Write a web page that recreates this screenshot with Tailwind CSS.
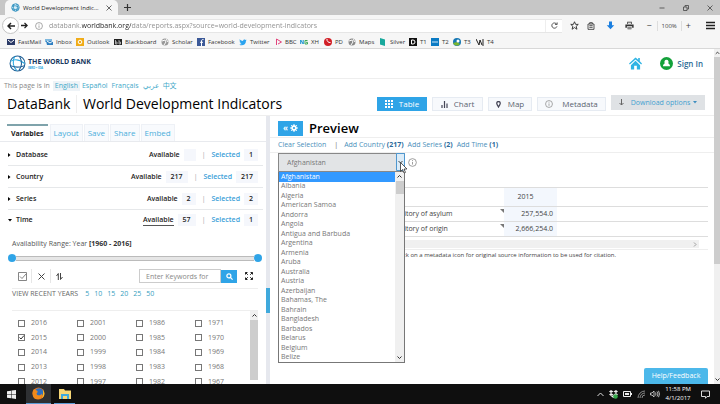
<!DOCTYPE html>
<html lang="en">
<head>
    <meta charset="UTF-8">
    <meta name="viewport" content="width=device-width, initial-scale=1.0">
    <title>World Development Indicators | DataBank</title>
    <script src="https://cdn.jsdelivr.net/npm/@tailwindcss/browser@4"></script>
</head>
<body class="h-screen flex flex-col overflow-hidden bg-white text-[#444] text-[7px] leading-[10px] font-['Open_Sans','Noto_Sans_CJK_SC',sans-serif]">

    <!-- Browser title bar -->
    <div class="flex h-[15px] shrink-0 bg-[#c6c6c6]">
        <div class="flex items-center w-[113px] ml-[5px] pl-[6px] pr-[6px] bg-[#f6f6f6] rounded-t-[5px] text-[6px] text-[#222]">
            <svg class="size-[9px] shrink-0" viewBox="0 0 24 24" fill="none" stroke="#1c86b8" stroke-width="2"><circle cx="12" cy="12" r="10" fill="#d8eef8"/><path d="M3 9c6-3 12-2 18 3M8 3c-3 6-2 13 3 19M15 2c3 6 3 13-1 20M2 15c6 3 13 3 19 0"/></svg>
            <span class="ml-[3px] flex-1 whitespace-nowrap">World Development Indic...</span>
            <button aria-label="Close tab"><svg class="size-[6px]" viewBox="0 0 6 6" stroke="#444" stroke-width="0.8"><path d="M.5.5l5 5M5.5.5l-5 5"/></svg></button>
        </div>
        <button class="ml-[6px]" aria-label="New tab"><svg class="size-[7px]" viewBox="0 0 7 7" stroke="#333" stroke-width="1.2"><path d="M3.500 0v7M0 3.500h7"/></svg></button>
        <div class="flex items-center gap-[18px] ml-auto pr-[7px]">
            <svg class="size-[6px]" viewBox="0 0 6 6" stroke="#444" stroke-width="0.8"><path d="M.5 3h5"/></svg>
            <svg class="size-[6px]" viewBox="0 0 6 6" fill="none" stroke="#444" stroke-width="0.8"><path d="M.5 2h3.500v3.500H.5zM2 2V.5h3.500V4H4"/></svg>
            <svg class="size-[6px]" viewBox="0 0 6 6" stroke="#444" stroke-width="0.8"><path d="M.5.5l5 5M5.500.5l-5 5"/></svg>
        </div>
    </div>

    <!-- Address bar -->
    <div class="flex items-center h-[20px] shrink-0 bg-[#f6f6f6] pl-[2px] pr-[5px] pt-[1px]">
        <button class="flex items-center justify-center size-[17px] shrink-0 rounded-full border border-[#c4c4c4] bg-white" aria-label="Back">
            <svg class="size-[8px]" viewBox="0 0 8 8" fill="none" stroke="#222" stroke-width="1.500"><path d="M8 4H1.500M4 1L1 4l3 3"/></svg>
        </button>
        <div class="flex items-center flex-1 h-[14px] bg-white border-y border-[#e6e6e6]">
            <button class="ml-[2px]" aria-label="Forward"><svg class="size-[7px]" viewBox="0 0 8 8" fill="none" stroke="#222" stroke-width="1.500"><path d="M0 4h6.500M4 1l3 3-3 3"/></svg></button>
            <svg class="size-[8px] ml-[7px] shrink-0" viewBox="0 0 10 10" fill="none" stroke="#888" stroke-width="0.9"><circle cx="5" cy="5" r="4.300"/><path d="M5 4.300v3M5 2.300v1"/></svg>
            <input type="text" aria-label="Address" value="databank.worldbank.org/data/reports.aspx?source=world-development-indicators" class="ml-[6px] flex-1 h-[12px] text-[7px] text-transparent bg-clip-text bg-[linear-gradient(90deg,#8c8c8c_33px,#222_33px,#222_82px,#8c8c8c_82px)]">
            <button class="flex items-center justify-center w-[17px] h-[12px] border-l border-[#eee]" aria-label="Reload"><svg class="size-[7px]" viewBox="0 0 8 8" fill="none" stroke="#444" stroke-width="1"><path d="M6.500 2.500a3 3 0 1 0 .3 2.500M7 .5v2.300H4.600"/></svg></button>
        </div>
        <div class="flex items-center ml-[8px] text-[6px]">
            <svg class="size-[9px]" viewBox="0 0 24 24" fill="none" stroke="#333" stroke-width="2.500"><path d="M12 2l3 7h7l-5.500 5 2 8L12 17.500 5.500 22l2-8L2 9h7z"/></svg>
            <svg class="size-[8px] ml-[8px]" viewBox="0 0 24 24" fill="none" stroke="#333" stroke-width="2.500"><path d="M3 6h18v16H3zM8 6V2h8v4M7 11h10M7 16h10"/></svg>
            <svg class="size-[9px] ml-[11px]" viewBox="0 0 24 24" fill="#1b7fe0"><path d="M8 1h8v10h6L12 22 2 11h6z"/></svg>
            <svg class="size-[9px] ml-[10px]" viewBox="0 0 24 24" fill="#333"><path d="M6 2h12v6H6zM1 9h22v9h-4v-4H5v4H1zM7 16h10v6H7z" /><path d="M8 4h8v4H8zM8 17h8v3H8z" fill="#ddd"/></svg>
            <span class="ml-[12px] text-[9px]">−</span>
            <span class="ml-[5px] px-[4px] border-x border-[#ddd]">100%</span>
            <span class="ml-[4px] text-[9px]">+</span>
            <svg class="size-[9px] ml-[15px]" viewBox="0 0 9 9" stroke="#222" stroke-width="1.300"><path d="M0 1.500h9M0 4.500h9M0 7.500h9"/></svg>
        </div>
    </div>

    <!-- Bookmarks -->
    <nav class="flex items-center h-[14px] shrink-0 bg-[#f6f6f6] border-b border-[#d8d8d8] pl-[7px] text-[6px] text-[#333] whitespace-nowrap">
        <a href="#" class="flex items-center gap-[3px] w-[38px]"><svg class="size-[8px]" viewBox="0 0 8 8"><path d="M0 1h8v6H0z" fill="#2b3a67"/><path d="M1 2l3 2.500L7 2" stroke="#fff" fill="none"/></svg>FastMail</a>
        <a href="#" class="flex items-center gap-[3px] w-[31px]"><svg class="size-[8px]" viewBox="0 0 8 8"><path d="M0 1h7v3H0z" fill="#7fb8de"/><path d="M1 3h7v4H2z" fill="#2f7fc2"/><path d="M2 3l3 2 3-2" stroke="#fff" fill="none"/></svg>Inbox</a>
        <a href="#" class="flex items-center gap-[3px] w-[38px]"><svg class="size-[8px]" viewBox="0 0 8 8"><path d="M0 0h8v8H0z" fill="#f0ac18"/><circle cx="4" cy="4" r="1.800" fill="none" stroke="#fff"/></svg>Outlook</a>
        <a href="#" class="flex items-center gap-[3px] w-[47px]"><svg class="size-[8px]" viewBox="0 0 8 8"><path d="M0 1h8v6H0z" fill="#222"/><path d="M1.500 2v4h1.500V4H1.500M5 2v4h1.500V4H5" stroke="#ddd" stroke-width=".7" fill="none"/></svg>Blackboard</a>
        <a href="#" class="flex items-center gap-[3px] w-[36px]"><svg class="size-[8px]" viewBox="0 0 8 8"><circle cx="4" cy="4" r="3.500" fill="#999"/><path d="M1 3l3-1 1 2-2 3M5 1l2 3" stroke="#fff" fill="none"/></svg>Scholar</a>
        <a href="#" class="flex items-center gap-[3px] w-[42px]"><svg class="size-[8px]" viewBox="0 0 8 8"><path d="M0 0h8v8H0z" fill="#3b5998"/><path d="M6.500 1.500c-1.500 0-2 .3-2 1.500v5M3 4.300h3" stroke="#fff" fill="none"/></svg>Facebook</a>
        <a href="#" class="flex items-center gap-[3px] w-[36px]"><svg class="size-[8px]" viewBox="0 0 24 24" fill="#2aa3ef"><path d="M23 5l-2.500.8A5 5 0 0 0 12 9C8 9 5 7 2 4c-1 3 0 5 2 6.500L2 10c0 3 2 4.500 4 5H4c1 2 2.500 3 4.500 3.200C6 20 4 20 1 20c9 5 20 0 20-12z"/></svg>Twitter</a>
        <a href="#" class="flex items-center gap-[2px] w-[25px]"><svg class="size-[8px]" viewBox="0 0 8 8" fill="none" stroke="#e2447c"><path d="M1.500 7V1l5 3-3.500 2"/></svg>BBC</a>
        <a href="#" class="flex items-center gap-[3px] w-[24px]"><svg class="size-[8px]" viewBox="0 0 8 8" fill="none"><path d="M.7 6V2l2.500 4V2" stroke="#1592cf"/><path d="M7.500 2.500H5V6h2.500V4.300H6" stroke="#3aa655"/></svg>XH</a>
        <a href="#" class="flex items-center gap-[3px] w-[24px]"><svg class="size-[8px]" viewBox="0 0 8 8"><circle cx="4" cy="4" r="4" fill="#d21f26"/><path d="M3 1a3 3 0 0 0 3.500 3.500" stroke="#fff" fill="none"/></svg>PD</a>
        <a href="#" class="flex items-center gap-[3px] w-[31px]"><svg class="size-[8px]" viewBox="0 0 8 8"><circle cx="4" cy="4" r="3.500" fill="#888"/><path d="M1 3l3-1 1 2-2 3M5 1l2 3" stroke="#fff" fill="none"/></svg>Maps</a>
        <a href="#" class="flex items-center gap-[3px] w-[30px]"><svg class="size-[8px]" viewBox="0 0 8 8"><path d="M1 0l5 1.500V8L1 6.500z" fill="#18a89c"/></svg>Silver</a>
        <a href="#" class="flex items-center gap-[3px] w-[22px]"><svg class="size-[8px]" viewBox="0 0 8 8"><path d="M0 0h8v8H0z" fill="#111"/><path d="M2.500 2v4h1.500a2 2 0 0 0 0-4z" stroke="#fff" fill="none"/></svg>T1</a>
        <a href="#" class="flex items-center gap-[3px] w-[22px]"><svg class="size-[8px]" viewBox="0 0 8 8"><path d="M0 0h8v8H0z" fill="#0b7bc4"/><path d="M1 4h6" stroke="#cfe8f8"/></svg>T2</a>
        <a href="#" class="flex items-center gap-[3px] w-[23px]"><svg class="size-[8px]" viewBox="0 0 8 8"><circle cx="4" cy="4" r="4" fill="#1677b3"/><path d="M0 5a4 4 0 0 0 7 1L4 4z" fill="#7ab530"/><circle cx="5" cy="3" r="1.500" fill="#fff"/></svg>T3</a>
        <a href="#" class="flex items-center gap-[3px]"><svg class="size-[8px]" viewBox="0 0 8 8" stroke="#222" fill="none"><path d="M0 1l3 6 1-5 2 5M7 1v7"/></svg>T4</a>
    </nav>

    <div class="flex flex-1 min-h-0">
        <div class="flex flex-col flex-1 min-w-0">

            <header class="flex items-center h-[30px] shrink-0 border-b border-[#eee] pl-[9px] pr-[11px]">
                <svg class="size-[17px]" viewBox="0 0 24 24" fill="none" stroke-width="1.500"><circle cx="12" cy="12" r="10.500" stroke="#1f5f95"/><path d="M2 9c7-4 14-2 20 3M8 2C4 9 6 17 11 22" stroke="#29a9e0"/><path d="M15 2c4 7 3 14-1 20M2 15c7 3 13 3 20 0" stroke="#1f5f95"/></svg>
                <div class="ml-[2px]">
                    <p class="text-[7px] leading-[8px] font-bold text-[#17375e]">THE WORLD BANK</p>
                    <p class="text-[3px] leading-[4px] font-bold text-[#29a9e0]">IBRD • IDA</p>
                </div>
                <a href="#" class="ml-auto" aria-label="Home"><svg class="size-[13px]" viewBox="0 0 24 24" fill="#2fb4e4"><path d="M12 1L0 12l1.500 2L12 4.500 22.500 14l1.500-2-4-4V2h-3v3zM12 7l-8.500 8v8h6v-7h5v7h6v-8z"/></svg></a>
                <a href="#" class="flex items-center gap-[4px] ml-[18px] text-[8px] font-semibold text-[#2c6a96]">
                    <svg class="size-[13px]" viewBox="0 0 24 24"><circle cx="12" cy="12" r="12" fill="#14a13a"/><path d="M12 5a4 4 0 0 1 3 6.500c2 1 3.500 3 3.500 5.500h-13c0-2.500 1.500-4.500 3.500-5.500A4 4 0 0 1 12 5z" fill="#fff"/></svg>
                    Sign In
                </a>
            </header>

            <div class="flex items-center h-[14px] shrink-0 pl-[4px] text-[7px] text-[#3fa9c9]">
                <span class="text-[#888]">This page is in</span>
                <a href="#" class="ml-[3px] px-[2px] bg-[#eef3f7]">English</a>
                <a href="#" class="ml-[2px]">Español</a>
                <a href="#" class="ml-[4px]">Français</a>
                <a href="#" class="ml-[4px]">عربي</a>
                <a href="#" class="ml-[4px]">中文</a>
            </div>

            <div class="flex items-center h-[23px] shrink-0 border-b border-[#eee] pl-[7px] pr-[9px] whitespace-nowrap">
                <h1 class="flex text-[14px] leading-[18px] font-normal text-black"><span class="w-[70px] mr-[6px] border-r border-[#eee]">DataBank</span>World Development Indicators</h1>
                <div class="flex ml-auto gap-[5px] items-center text-[8px] text-[#5b6470]">
                    <button class="flex items-center justify-center gap-[6px] w-[50px] h-[14px] bg-[#2fa4e7] text-white font-medium"><svg class="size-[8px]" viewBox="0 0 8 8" fill="#fff"><path d="M0 0h2v2H0zM3 0h2v2H3zM6 0h2v2H6zM0 3h2v2H0zM3 3h2v2H3zM6 3h2v2H6zM0 6h2v2H0zM3 6h2v2H3zM6 6h2v2H6z"/></svg>Table</button>
                    <button class="flex items-center justify-center gap-[6px] w-[51px] h-[14px] bg-[#f7f9fc] border border-[#e6ebf2]"><svg class="size-[7px]" viewBox="0 0 7 7" stroke="#445" stroke-width="1.200"><path d="M1 7V4M3.500 7V0M6 7V2.500"/></svg>Chart</button>
                    <button class="flex items-center justify-center gap-[7px] w-[44px] h-[14px] bg-[#f7f9fc] border border-[#e6ebf2]"><svg class="w-[5px] h-[7px]" viewBox="0 0 10 14" fill="none" stroke="#445" stroke-width="2.500"><path d="M5 12C3 8 1.500 7 1.500 4.500a3.500 3.500 0 0 1 7 0C8.500 7 7 8 5 12z"/></svg>Map</button>
                    <button class="flex items-center justify-center gap-[9px] w-[69px] h-[14px] bg-[#f7f9fc] border border-[#e6ebf2]"><svg class="size-[8px]" viewBox="0 0 10 10" fill="none" stroke="#888" stroke-width="0.9"><circle cx="5" cy="5" r="4.300"/><path d="M5 4.300v3M5 2.300v1"/></svg>Metadata</button>
                    <button class="flex items-center justify-center gap-[7px] w-[94px] h-[15px] mb-[3px] bg-[#dfe2e5] text-[7px] text-[#3f9fd0]"><svg class="w-[5px] h-[7px]" viewBox="0 0 5 7" fill="none" stroke="#666" stroke-width="1"><path d="M2.500 0v6M.5 4l2 2 2-2"/></svg><span class="flex items-center gap-[3px]">Download options<svg class="w-[4px] h-[3px]" viewBox="0 0 4 3" fill="#3f8fc0"><path d="M0 0h4L2 2.500z"/></svg></span></button>
                </div>
            </div>

            <div class="flex flex-1 min-h-0">

                <!-- Variables panel -->
                <section class="w-[266px] shrink-0 overflow-hidden text-[#222]">
                    <div class="flex gap-[1px] h-[18px] mt-[8px] pl-[7px] border-b border-[#e8eaee] text-[8px] text-[#4aaedb]">
                        <button class="px-[4px] mr-[1px] bg-white border-t-2 border-[#7fa3ab] text-[#222] text-[7px] font-bold">Variables</button>
                        <button class="px-[3px] bg-[#f8fafd] border border-b-0 border-[#eef1f6]">Layout</button>
                        <button class="px-[3px] bg-[#f8fafd] border border-b-0 border-[#eef1f6]">Save</button>
                        <button class="px-[3px] bg-[#f8fafd] border border-b-0 border-[#eef1f6]">Share</button>
                        <button class="px-[3px] bg-[#f8fafd] border border-b-0 border-[#eef1f6]">Embed</button>
                    </div>

                    <div class="pt-[2px] pl-[8px] pr-[3px] font-semibold">
                        <div class="flex items-center h-[22px] border-b border-[#e6e8ea] pr-[5px]">
                            <svg class="w-[3px] h-[4px] mr-[5px]" viewBox="0 0 3 4"><path d="M0 0l2.500 2L0 4z"/></svg>
                            <span class="flex-1">Database</span>
                            <a href="#">Available</a><span class="ml-[4px] w-[12px] h-[12px] bg-[#f5f7fc]"></span>
                            <span class="mx-[6px] text-[#bbb]">|</span>
                            <a href="#" class="text-[#3ba0d8]">Selected</a><span class="ml-[4px] w-[14px] leading-[12px] text-center bg-[#f5f7fc]">1</span>
                        </div>
                        <div class="flex items-center h-[22px] border-b border-[#e6e8ea] pr-[5px]">
                            <svg class="w-[3px] h-[4px] mr-[5px]" viewBox="0 0 3 4"><path d="M0 0l2.500 2L0 4z"/></svg>
                            <span class="flex-1">Country</span>
                            <a href="#">Available</a><span class="ml-[4px] w-[22px] leading-[12px] text-center bg-[#f5f7fc]">217</span>
                            <span class="mx-[6px] text-[#bbb]">|</span>
                            <a href="#" class="text-[#3ba0d8]">Selected</a><span class="ml-[4px] w-[22px] leading-[12px] text-center bg-[#f5f7fc]">217</span>
                        </div>
                        <div class="flex items-center h-[22px] border-b border-[#e6e8ea] pr-[5px]">
                            <svg class="w-[3px] h-[4px] mr-[5px]" viewBox="0 0 3 4"><path d="M0 0l2.500 2L0 4z"/></svg>
                            <span class="flex-1">Series</span>
                            <a href="#">Available</a><span class="ml-[4px] w-[14px] leading-[12px] text-center bg-[#f5f7fc]">2</span>
                            <span class="mx-[6px] text-[#bbb]">|</span>
                            <a href="#" class="text-[#3ba0d8]">Selected</a><span class="ml-[4px] w-[14px] leading-[12px] text-center bg-[#f5f7fc]">2</span>
                        </div>
                        <div class="flex items-center h-[20px] pr-[5px]">
                            <svg class="w-[4px] h-[3px] mr-[4px]" viewBox="0 0 4 3"><path d="M0 0h4L2 2.500z"/></svg>
                            <span class="flex-1">Time</span>
                            <a href="#" class="border-b border-[#555]">Available</a><span class="ml-[4px] w-[18px] leading-[12px] text-center bg-[#f5f7fc]">57</span>
                            <span class="mx-[6px] text-[#bbb]">|</span>
                            <a href="#" class="text-[#3ba0d8]">Selected</a><span class="ml-[4px] w-[14px] leading-[12px] text-center bg-[#f5f7fc]">1</span>
                        </div>
                    </div>

                    <div class="pl-[12px] pr-[8px] pt-[9px] text-[#555]">
                        <p>Availability Range: Year <b class="text-[#333] font-bold">[1960 - 2016]</b></p>
                        <div class="flex items-center h-[8px] -ml-[4px] mt-[5px]">
                            <span class="size-[8px] rounded-full bg-[#2fa4e7]"></span>
                            <span class="flex-1 h-[5px] bg-[#e6e6e6] border-y border-[#bbb]"></span>
                            <span class="size-[8px] -mr-[4px] rounded-full bg-[#2fa4e7]"></span>
                        </div>
                        <div class="flex items-center h-[27px] pt-[2px] border-b border-[#eee]">
                            <button class="w-[20px] h-[14px] pl-[6px] border-r border-[#e6e6e6]" aria-label="Select all"><svg class="size-[9px]" viewBox="0 0 9 9" fill="none" stroke="#666" stroke-width=".8"><path d="M.5.5h8v8h-8zM2 4.500l2 2 4-4.500"/></svg></button>
                            <button class="w-[19px] h-[14px] pl-[6px] border-r border-[#e6e6e6]" aria-label="Clear all"><svg class="size-[7px]" viewBox="0 0 7 7" stroke="#444"><path d="M.5.5l6 6M6.500.5l-6 6"/></svg></button>
                            <button class="pl-[5px]" aria-label="Sort"><svg class="size-[7px]" viewBox="0 0 7 7" fill="none" stroke="#444" stroke-width="1"><path d="M2.300 7V.5L.5 3M4.500 0v6.500L6.500 4"/></svg></button>
                            <input type="text" aria-label="Search years" placeholder="Enter Keywords for" class="w-[82px] h-[14px] ml-auto px-[6px] border border-[#ccc] text-[7px] placeholder:text-[#888]">
                            <button class="flex items-center justify-center w-[16px] h-[13px] bg-[#2fa4e7]" aria-label="Search"><svg class="size-[7px]" viewBox="0 0 8 8" fill="none" stroke="#fff" stroke-width="1.400"><circle cx="3.300" cy="3.300" r="2.300"/><path d="M5 5l2.500 2.500"/></svg></button>
                            <button class="ml-[8px] mr-[5px]" aria-label="Expand"><svg class="size-[8px]" viewBox="0 0 8 8" fill="none" stroke="#222"><path d="M.5 2.500v-2h2M.5.5l2.300 2.300M5.500.5h2v2M7.500.5L5.200 2.800M.5 5.500v2h2M.5 7.500l2.300-2.300M7.500 5.500v2h-2M7.500 7.500L5.200 5.200"/></svg></button>
                        </div>
                        <p class="flex gap-[5px] h-[22px] border-b border-[#eee] text-[#35a0c0]"><span class="mr-[2px] text-[#666]">VIEW RECENT YEARS</span><a href="#">5</a><a href="#">10</a><a href="#">15</a><a href="#">20</a><a href="#">25</a><a href="#">50</a></p>
                        <div class="flex">
                            <div id="years" class="grid grid-cols-[repeat(3,59px)_auto] grid-rows-5 flex-1 h-[73px] mt-[5px] pl-[6px]"></div>
                            <div class="w-[8px] flex flex-col items-center bg-[#f0f0f0] h-[69px]">
                                <svg class="w-[5px] h-[9px] shrink-0" viewBox="0 0 5 9" fill="none" stroke="#333"><path d="M.5 5.500l2-2 2 2"/></svg>
                                <span class="w-full flex-1 bg-[#cdcdcd]"></span>
                            </div>
                        </div>
                    </div>
                </section>

                <div class="w-[4px] shrink-0 bg-[#e6e8ee] pt-[172px]"><div class="h-[25px] bg-[#3fa9dc]"></div></div>

                <!-- Preview panel -->
                <section class="relative flex-1 min-w-0">
                    <div class="flex items-center h-[22px] pt-[3px] pl-[8px] border-b border-[#eee]">
                        <button class="flex items-center justify-center gap-[2px] w-[25px] h-[15px] bg-[#2fa4e7] text-white text-[8px] font-bold">«<svg class="size-[8px]" viewBox="0 0 8 8" fill="none" stroke="#fff"><circle cx="4" cy="4" r="2" stroke-width="1.800"/><path d="M4 0v8M0 4h8M1.200 1.200l5.600 5.600M6.800 1.200L1.200 6.800" stroke-dasharray="1.500 5 1.500 5"/></svg></button>
                        <h2 class="ml-[6px] text-[13px] leading-[16px] font-semibold text-black">Preview</h2>
                    </div>
                    <div class="flex items-center h-[15px] pl-[8px] border-b border-[#eee] text-[#4a8fba]">
                        <a href="#">Clear Selection</a>
                        <span class="ml-[8px] mr-[6px] text-[#666]">|</span>
                        <a href="#">Add Country <b class="text-[#2c6a9c]">(217)</b></a>
                        <a href="#" class="ml-[4px]">Add Series <b class="text-[#2c6a9c]">(2)</b></a>
                        <a href="#" class="ml-[4px]">Add Time <b class="text-[#2c6a9c]">(1)</b></a>
                    </div>
                    <div class="flex items-center h-[34px] pl-[8px] pb-[15px]">
                        <div class="relative w-[127px] h-[19px]">
                            <select aria-label="Country" class="appearance-none block w-full h-full pl-[8px] bg-[#e2e4e6] border border-[#888] text-[7px] text-[#777]"><option>Afghanistan</option></select>
                            <svg class="absolute right-0 top-0 w-[9px] h-[18px]" viewBox="0 0 9 18" fill="none"><path d="M.5.5h8v17h-8z" fill="#dcecf8" stroke="#4f97cf"/><path d="M2.500 8l2 2 2-2" stroke="#444"/></svg>
                            <svg class="absolute left-[122px] top-[9px] z-20 w-[8px] h-[12px]" viewBox="0 0 8 12" fill="#fff" stroke="#333" stroke-width=".8"><path d="M.5.5v9l2-2 1.500 3.500 1.500-.6L4 7h3z"/></svg>
                            <div class="absolute left-0 top-full z-10 flex w-full border border-t-0 border-[#777] bg-white">
                                <ul id="countries" role="listbox" class="flex flex-col flex-1 h-[190px] text-[#777]"></ul>
                                <div class="flex flex-col items-center w-[9px] bg-[#f0f0f0]">
                                    <svg class="w-[5px] h-[9px]" viewBox="0 0 5 9" fill="none" stroke="#333"><path d="M.5 5.500l2-2 2 2"/></svg>
                                    <span class="w-[8px] h-[13px] bg-[#cdcdcd]"></span>
                                    <svg class="w-[5px] h-[9px] mt-auto" viewBox="0 0 5 9" fill="none" stroke="#333"><path d="M.5 3.500l2 2 2-2"/></svg>
                                </div>
                            </div>
                        </div>
                        <svg class="size-[9px] ml-[3px]" viewBox="0 0 10 10" fill="none" stroke="#888" stroke-width="0.9"><circle cx="5" cy="5" r="4.300"/><path d="M5 4.300v3M5 2.300v1"/></svg>
                    </div>
                    <div class="pl-[8px] pr-[6px] text-[#444]">
                        <table class="w-full table-fixed border-collapse">
                            <thead>
                                <tr class="h-[19px] border-y border-[#ddd]"><th class="w-[226px]"></th><th class="w-[53px] pr-[10px] bg-[#f3f7fd] font-normal">2015</th><th></th></tr>
                            </thead>
                            <tbody>
                                <tr class="h-[15px] border-b border-[#ddd]">
                                    <td class="p-0"><div class="flex justify-between items-start pl-[114px]">territory of asylum<svg class="size-[4px]" viewBox="0 0 4 4" fill="#777"><path d="M0 0h4v4z"/></svg></div></td>
                                    <td class="pr-[4px] text-right bg-[#f3f7fd]">257,554.0</td><td></td>
                                </tr>
                                <tr class="h-[15px] border-b border-[#ddd]">
                                    <td class="p-0"><div class="flex justify-between items-start pl-[114px]">territory of origin<svg class="size-[4px]" viewBox="0 0 4 4" fill="#777"><path d="M0 0h4v4z"/></svg></div></td>
                                    <td class="pr-[4px] text-right bg-[#f3f7fd]">2,666,254.0</td><td></td>
                                </tr>
                            </tbody>
                        </table>
                        <div class="flex items-center justify-end h-[8px] mt-[3px] mr-[9px] pr-[2px] bg-[#f0f0f0]"><svg class="w-[4px] h-[5px]" viewBox="0 0 4 5" fill="none" stroke="#888" stroke-width=".8"><path d="M1 .5l2 2-2 2"/></svg></div>
                        <p class="mt-[1px] pl-[118px] border-t border-[#eee] text-[6px] font-medium whitespace-nowrap">Click on a metadata icon for original source information to be used for citation.</p>
                    </div>
                    <button class="absolute right-[6px] bottom-0 w-[64px] h-[16px] rounded-t-[2px] bg-[#4cb8ea] text-white text-[7px] font-medium">Help/Feedback</button>
                </section>
            </div>
        </div>

        <!-- Page scrollbar -->
        <div class="flex flex-col items-center w-[6px] bg-[#f0f0f0]">
            <svg class="w-[5px] h-[8px] shrink-0" viewBox="0 0 5 9" fill="none" stroke="#333"><path d="M.5 5.500l2-2 2 2"/></svg>
            <span class="w-full h-[207px] bg-[#cdcdcd]"></span>
            <svg class="w-[5px] h-[9px] mt-auto shrink-0" viewBox="0 0 5 9" fill="none" stroke="#333"><path d="M.5 3.500l2 2 2-2"/></svg>
        </div>
    </div>

    <!-- Taskbar -->
    <footer class="flex items-center h-[20px] shrink-0 bg-[#0f0f0f] text-white text-[6px] leading-[9px]">
        <button class="ml-[7px] mr-[10px]" aria-label="Start"><svg class="size-[9px]" viewBox="0 0 9 9" fill="#eee"><path d="M0 1.300L4 .7v3.500H0zM4.500.6L9 0v4.200H4.500zM0 4.700h4v3.500L0 7.700zM4.500 4.700H9V9l-4.500-.7z"/></svg></button>
        <button class="flex items-center justify-center w-[25px] h-full bg-[#2e3033] border-b border-[#5b9bd5]" aria-label="Firefox"><svg class="size-[13px]" viewBox="0 0 24 24"><circle cx="12" cy="12" r="11" fill="#e8761a"/><circle cx="13" cy="10" r="7.500" fill="#2b6fc2"/><path d="M1 10C2 3 6 3 7 6c3 0 4 2 3 4-2 1-2 4 1 5s6 0 7-3c2 6-3 11-9 10.500S1 17 1 10z" fill="#f08a1c"/><path d="M20 5c4 5 4 12-2 16 3-5 3-11 2-16z" fill="#f9c22b"/></svg></button>
        <button class="flex items-center justify-center w-[21px] h-full ml-[3px] border-b border-[#5b9bd5]" aria-label="File Explorer"><svg class="w-[12px] h-[10px]" viewBox="0 0 12 10"><path d="M0 0h5l1 1.500h6V10H0z" fill="#f6d675"/><path d="M2 5h8v5H8V7H4v3H2z" fill="#3fa9dc"/></svg></button>
        <div class="flex items-center gap-[5px] ml-auto pr-[10px]">
            <svg class="w-[7px] h-[5px]" viewBox="0 0 7 5" fill="none" stroke="#ddd"><path d="M.5 4l3-3 3 3"/></svg>
            <svg class="size-[9px]" viewBox="0 0 9 9" fill="#eee"><path d="M2 0l2.500 1.500L2 3 0 1.500zM7 0l2 1.500L7 3 4.500 1.500zM2 3l2.500 1.500L2 6 0 4.500zM7 3l2 1.500L7 6 4.500 4.500zM4.500 5L7 6.500 4.500 8 2 6.500z"/><circle cx="6.500" cy="6.500" r="2.300" fill="#35a84a"/></svg>
            <svg class="w-[9px] h-[6px]" viewBox="0 0 9 6"><path d="M.5.5h7v5h-7z" fill="none" stroke="#eee"/><path d="M2 2h4v2H2zM8 2h1v2H8z" fill="#eee"/></svg>
            <svg class="size-[8px]" viewBox="0 0 8 8" fill="none" stroke="#999" stroke-width=".9"><path d="M1 8a7 7 0 0 1 7-7M3 8a5 5 0 0 1 5-5M5 8a3 3 0 0 1 3-3"/></svg>
            <svg class="w-[10px] h-[8px]" viewBox="0 0 10 8" fill="none" stroke="#ddd" stroke-width=".8"><path d="M.5 3h1.500l2-2v6l-2-2H.5zM5.500 2.500q1 1.500 0 3M7 1.500q2 2.500 0 5M8.500.8q2 3.200 0 6.400"/></svg>
            <div class="text-center"><p>11:58 PM</p><p>4/1/2017</p></div>
            <svg class="size-[9px] ml-[5px]" viewBox="0 0 9 9" fill="none" stroke="#ddd"><path d="M.5 1h8v5.500H6L4.500 8.300V6.500h-4z"/></svg>
        </div>
    </footer>

    <script>
        const years = [2016, 2001, 1986, 1971];
        const yearGrid = document.getElementById('years');
        for (let row = 0; row < 5; row++) {
            years.forEach(start => {
                const year = start - row;
                yearGrid.innerHTML += `
                    <label class="flex items-center gap-[6px] text-[#777]">
                        <span class="relative size-[7px]">
                            <input type="checkbox" ${year === 2015 ? 'checked' : ''} class="peer appearance-none block size-[7px] border border-[#777] bg-white">
                            <svg class="hidden peer-checked:block absolute inset-0 size-[7px]" viewBox="0 0 7 7" fill="none" stroke="#333"><path d="M1.500 3.500l1.500 1.500 3-3.500"/></svg>
                        </span>
                        ${year}
                    </label>`;
            });
        }

        const countries = ['Afghanistan', 'Albania', 'Algeria', 'American Samoa', 'Andorra', 'Angola', 'Antigua and Barbuda',
            'Argentina', 'Armenia', 'Aruba', 'Australia', 'Austria', 'Azerbaijan', 'Bahamas, The', 'Bahrain', 'Bangladesh',
            'Barbados', 'Belarus', 'Belgium', 'Belize'];
        document.getElementById('countries').innerHTML = countries.map((name, i) =>
            `<li role="option" class="flex items-center flex-1 min-h-0 pl-[2px] ${i === 0 ? 'bg-[#3399ff] text-white' : ''}">${name}</li>`
        ).join('');
    </script>
</body>
</html>
